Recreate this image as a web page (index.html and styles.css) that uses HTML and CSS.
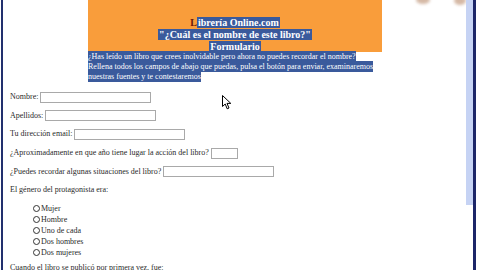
FILE: index.html
```html
<!DOCTYPE html>
<html lang="es">
<head>
<meta charset="utf-8">
<title>Librería Online.com - Formulario</title>
<link rel="stylesheet" href="styles.css">
</head>
<body>
<div class="frame">
  <div class="edge-left"></div>
  <main class="page">
    <div class="header">
      <div class="banner">
        <div class="tline"><span class="first">L</span><span class="sel">ibrería Online.com</span></div>
        <div class="tline"><span class="sel">"¿Cuál es el nombre de este libro?"</span></div>
        <div class="tline"><span class="sel">Formulario</span></div>
      </div>
      <p class="intro"><span class="sel">¿Has leído un libro que crees inolvidable pero ahora no puedes recordar el nombre?</span><br><span class="sel">Rellena todos los campos de abajo que puedas, pulsa el botón para enviar, examinaremos</span><br><span class="sel">nuestras fuentes y te contestaremos</span></p>
    </div>
    <form class="form">
      <div class="row"><label>Nombre:</label><input class="w111" type="text"></div>
      <div class="row"><label>Apellidos:</label><input class="w111" type="text"></div>
      <div class="row"><label>Tu dirección email:</label><input class="w111" type="text"></div>
      <div class="row"><label>¿Aproximadamente en que año tiene lugar la acción del libro?</label><input class="w27" type="text"></div>
      <div class="row"><label>¿Puedes recordar algunas situaciones del libro?</label><input class="w111" type="text"></div>
      <div class="row"><label>El género del protagonista era:</label></div>
      <div class="radios">
        <div class="radio"><span class="dot"></span>Mujer</div>
        <div class="radio"><span class="dot"></span>Hombre</div>
        <div class="radio"><span class="dot"></span>Uno de cada</div>
        <div class="radio"><span class="dot"></span>Dos hombres</div>
        <div class="radio"><span class="dot"></span>Dos mujeres</div>
      </div>
      <div class="row"><label>Cuando el libro se publicó por primera vez, fue:</label></div>
    </form>
    <svg class="cursor" width="11" height="15" viewBox="0 0 11 15"><path d="M0.5 0.5 L0.5 11.5 L3.2 9 L5.2 13.8 L7 13 L5 8.4 L8.8 8.4 Z" fill="#fff" stroke="#000" stroke-width="1"/></svg>
    <div class="deco"><span class="blob b1"></span><span class="blob b2"></span></div>
  </main>
  <div class="scroll"><div class="thumb"></div></div>
  <div class="edge-right"></div>
  <div class="outside"></div>
</div>
</body>
</html>
```
FILE: styles.css
```css
* { box-sizing: border-box; }
html, body { margin: 0; padding: 0; background: #fff; }
body { width: 480px; height: 270px; overflow: hidden; font-family: "Liberation Serif", "Times New Roman", serif; color: #2a2a2a; }
.frame { display: flex; height: 270px; }
.edge-left { width: 2px; margin-left: 1px; background: #22306e; }
.page { flex: 1; position: relative; padding-left: 7px; overflow: hidden; }
.header { width: 294px; margin-left: 78px; }
.banner { background: #f99d3b; height: 52px; padding-top: 17px; text-align: center; font-weight: bold; font-size: 10px; line-height: 12px; }
.tline { height: 12px; }
.sel { background: #3a5a9c; color: #fff; }
.banner .sel { padding: 0 1px; }
.first { color: #6a1406; }
.intro { margin: 0; font-size: 8px; line-height: 10px; height: 30px; }
.intro .sel { padding: 1px 0; }
.form { margin-top: 9px; font-size: 8px; color: #2a2a2a; }
.row { display: flex; align-items: center; height: 12px; margin-bottom: 6.7px; white-space: nowrap; }
.row label { line-height: 12px; color: #2a2a2a; }
input { height: 11px; margin: 0 0 0 2px; padding: 0; border: 1px solid #a9a9a9; background: #fff; font-size: 8px; }
.w111 { width: 111px; }
.w27 { width: 27px; }
.radios { padding-left: 23px; margin-top: 4px; margin-bottom: 4px; color: #2a2a2a; }
.radio { display: flex; align-items: center; height: 11px; line-height: 11px; }
.dot { width: 7px; height: 7px; border: 1px solid #333; border-radius: 50%; margin-right: 1px; background: #fff; }
.cursor { position: absolute; left: 219px; top: 95px; }
.deco { position: absolute; left: 405px; top: -4px; width: 60px; height: 10px; }
.blob { position: absolute; border-radius: 50%; background: #b98a6a; filter: blur(1.5px); opacity: 0.6; }
.b1 { left: 8px; top: 0; width: 14px; height: 8px; }
.b2 { left: 46px; top: 0; width: 12px; height: 9px; }
.scroll { width: 7px; display: flex; flex-direction: column; }
.thumb { height: 205px; background: #c6d3f4; }
.edge-right { width: 3px; background: #1c2668; }
.outside { width: 4px; background: #fff; }
```
